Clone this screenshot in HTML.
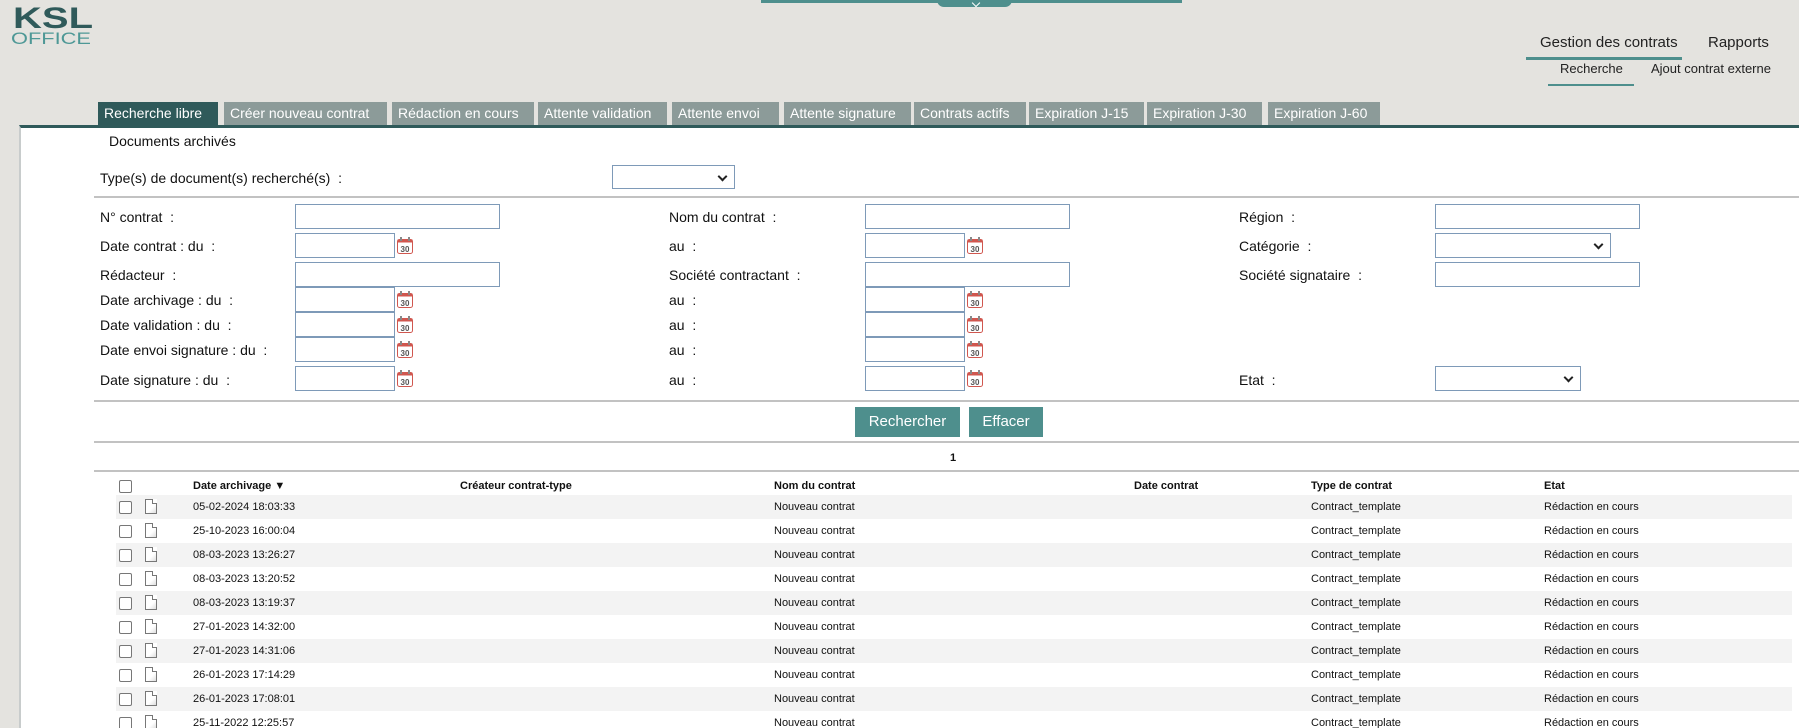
<!DOCTYPE html>
<html><head><meta charset="utf-8"><style>
*{margin:0;padding:0;box-sizing:border-box}
html{width:1799px;height:728px;overflow:hidden}
body{width:1799px;height:728px;background:#e4e3df;font-family:"Liberation Sans",Arial,sans-serif;position:relative;overflow:hidden;color:#111}
.a{position:absolute;white-space:nowrap}
.tab{position:absolute;top:102px;height:23px;background:#8c9b99;color:#fff;font-size:14px;line-height:23px;padding-left:6px}
.panel{position:absolute;left:19px;top:125px;width:1780px;height:603px;background:#fff;border-top:3px solid #2f5a5a;border-left:2px solid #c8cccc}
.lbl{position:absolute;font-size:14px;color:#111}
.in{position:absolute;height:25px;border:1px solid #7e9ab8;background:#fff}
.sel::after{content:"";position:absolute;right:8px;top:7px;width:5px;height:5px;border-right:2px solid #222;border-bottom:2px solid #222;transform:rotate(45deg)}
.cal{position:absolute;width:16px;height:17px}
.hr{position:absolute;left:94px;right:0;height:2px;background:#c2c2c2}
.btn{position:absolute;top:407px;height:30px;background:#4e8f8d;color:#fff;font-size:15px;line-height:30px;text-align:center}
.row{position:absolute;left:116px;width:1676px;height:24px;font-size:11px;line-height:25px}
.row span{position:absolute}
.cb{position:absolute;left:3px;top:6px;width:13px;height:13px;border:1.5px solid #777;border-radius:2px;background:#fff}
.doc{position:absolute;left:29px;top:4px;width:12px;height:15px;border:1px solid #777;background:linear-gradient(135deg,#fff 60%,#ddd);}
.doc::after{content:"";position:absolute;right:-1px;top:-1px;width:4px;height:4px;background:#fff;border-left:1px solid #777;border-bottom:1px solid #777}
.st{background:#f3f3f3}
.h span{font-weight:bold}
</style></head><body>
<svg class="a" style="left:10px;top:3px" width="90" height="44">
<text x="3" y="25" font-family="Liberation Sans" font-size="30" font-weight="bold" fill="#2f5a5a" textLength="80" lengthAdjust="spacingAndGlyphs">KSL</text>
<text x="1" y="41" font-family="Liberation Sans" font-size="17" fill="#4e9896" textLength="80" lengthAdjust="spacingAndGlyphs">OFFICE</text>
</svg>
<div class="a" style="left:761px;top:0;width:421px;height:3px;background:#4e8f8d"></div>
<div class="a" style="left:937px;top:0;width:75px;height:7px;background:#4e8f8d;border-radius:0 0 12px 12px"></div>
<div class="a" style="left:973px;top:0;width:6px;height:6px;border-right:1.5px solid #fff;border-bottom:1.5px solid #fff;transform:rotate(45deg)"></div>

<div class="a" style="left:1540px;top:34px;font-size:15px;color:#222">Gestion des contrats</div>
<div class="a" style="left:1708px;top:34px;font-size:15px;color:#222">Rapports</div>
<div class="a" style="left:1526px;top:57px;width:156px;height:3px;background:#4e8f8d"></div>
<div class="a" style="left:1560px;top:61px;font-size:13px;color:#222">Recherche</div>
<div class="a" style="left:1651px;top:61px;font-size:13px;color:#222">Ajout contrat externe</div>
<div class="a" style="left:1548px;top:84px;width:86px;height:2px;background:#4e8f8d"></div>

<div class="tab" style="left:98px;width:120px;background:#2f5a5a">Recherche libre</div>
<div class="tab" style="left:224px;width:163px">Créer nouveau contrat</div>
<div class="tab" style="left:392px;width:142px">Rédaction en cours</div>
<div class="tab" style="left:538px;width:129px">Attente validation</div>
<div class="tab" style="left:672px;width:107px">Attente envoi</div>
<div class="tab" style="left:784px;width:127px">Attente signature</div>
<div class="tab" style="left:914px;width:112px">Contrats actifs</div>
<div class="tab" style="left:1029px;width:115px">Expiration J-15</div>
<div class="tab" style="left:1147px;width:115px">Expiration J-30</div>
<div class="tab" style="left:1268px;width:112px">Expiration J-60</div>

<div class="panel"></div>
<div class="lbl" style="left:109px;top:133px">Documents archivés</div>
<div class="lbl" style="left:100px;top:170px">Type(s) de document(s) recherché(s)&nbsp; :</div>
<div class="in sel" style="left:612px;top:165px;width:123px;height:24px"></div>
<div class="hr" style="top:196px"></div>

<div class="lbl" style="left:100px;top:209px">N° contrat&nbsp; :</div>
<div class="in" style="left:295px;top:204px;width:205px"></div>
<div class="lbl" style="left:669px;top:209px">Nom du contrat&nbsp; :</div>
<div class="in" style="left:865px;top:204px;width:205px"></div>
<div class="lbl" style="left:1239px;top:209px">Région&nbsp; :</div>
<div class="in" style="left:1435px;top:204px;width:205px"></div>

<div class="lbl" style="left:100px;top:238px">Date contrat : du&nbsp; :</div>
<div class="in" style="left:295px;top:233px;width:100px"></div>
<div class="lbl" style="left:669px;top:238px">au&nbsp; :</div>
<div class="in" style="left:865px;top:233px;width:100px"></div>
<div class="lbl" style="left:1239px;top:238px">Catégorie&nbsp; :</div>
<div class="in sel" style="left:1435px;top:233px;width:176px"></div>

<div class="lbl" style="left:100px;top:267px">Rédacteur&nbsp; :</div>
<div class="in" style="left:295px;top:262px;width:205px"></div>
<div class="lbl" style="left:669px;top:267px">Société contractant&nbsp; :</div>
<div class="in" style="left:865px;top:262px;width:205px"></div>
<div class="lbl" style="left:1239px;top:267px">Société signataire&nbsp; :</div>
<div class="in" style="left:1435px;top:262px;width:205px"></div>

<div class="lbl" style="left:100px;top:292px">Date archivage : du&nbsp; :</div>
<div class="in" style="left:295px;top:287px;width:100px"></div>
<div class="lbl" style="left:669px;top:292px">au&nbsp; :</div>
<div class="in" style="left:865px;top:287px;width:100px"></div>

<div class="lbl" style="left:100px;top:317px">Date validation : du&nbsp; :</div>
<div class="in" style="left:295px;top:312px;width:100px"></div>
<div class="lbl" style="left:669px;top:317px">au&nbsp; :</div>
<div class="in" style="left:865px;top:312px;width:100px"></div>

<div class="lbl" style="left:100px;top:342px">Date envoi signature : du&nbsp; :</div>
<div class="in" style="left:295px;top:337px;width:100px"></div>
<div class="lbl" style="left:669px;top:342px">au&nbsp; :</div>
<div class="in" style="left:865px;top:337px;width:100px"></div>

<div class="lbl" style="left:100px;top:372px">Date signature : du&nbsp; :</div>
<div class="in" style="left:295px;top:366px;width:100px"></div>
<div class="lbl" style="left:669px;top:372px">au&nbsp; :</div>
<div class="in" style="left:865px;top:366px;width:100px"></div>
<div class="lbl" style="left:1239px;top:372px">Etat&nbsp; :</div>
<div class="in sel" style="left:1435px;top:366px;width:146px"></div>

<div class="hr" style="top:400px"></div>
<div class="btn" style="left:855px;width:105px">Rechercher</div>
<div class="btn" style="left:969px;width:74px">Effacer</div>
<div class="hr" style="top:441px"></div>
<div class="a" style="left:950px;top:452px;font-size:11px;font-weight:bold">1</div>
<div class="hr" style="top:470px"></div>

<div class="row h" style="top:474px"><div class="cb"></div><span style="left:77px">Date archivage ▼</span><span style="left:344px">Créateur contrat-type</span><span style="left:658px">Nom du contrat</span><span style="left:1018px">Date contrat</span><span style="left:1195px">Type de contrat</span><span style="left:1428px">Etat</span></div>
<div id="rows"></div>
<script>
var d=["05-02-2024 18:03:33","25-10-2023 16:00:04","08-03-2023 13:26:27","08-03-2023 13:20:52","08-03-2023 13:19:37","27-01-2023 14:32:00","27-01-2023 14:31:06","26-01-2023 17:14:29","26-01-2023 17:08:01","25-11-2022 12:25:57"];
var h="";
for(var i=0;i<d.length;i++){h+='<div class="row'+(i%2==0?' st':'')+'" style="top:'+(495+i*24)+'px"><div class="cb"></div><div class="doc"></div><span style="left:77px">'+d[i]+'</span><span style="left:658px">Nouveau contrat</span><span style="left:1195px">Contract_template</span><span style="left:1428px">Rédaction en cours</span></div>';}
document.getElementById("rows").innerHTML=h;
var c=[[397,237],[967,237],[397,291],[967,291],[397,316],[967,316],[397,341],[967,341],[397,370],[967,370]],s="";
c.forEach(function(p){s+='<svg class="cal" style="left:'+p[0]+'px;top:'+p[1]+'px" viewBox="0 0 16 17"><rect x="0.5" y="2.5" width="15" height="14" rx="2" fill="#fff" stroke="#d0574f"/><rect x="0.5" y="2.5" width="15" height="3" fill="#d0574f"/><rect x="3" y="0" width="2" height="4" fill="#888"/><rect x="11" y="0" width="2" height="4" fill="#888"/><text x="8" y="15" font-size="8" font-weight="bold" text-anchor="middle" fill="#555" font-family="Liberation Sans">30</text></svg>';});
document.body.insertAdjacentHTML("beforeend",s);
</script>
</body></html>
